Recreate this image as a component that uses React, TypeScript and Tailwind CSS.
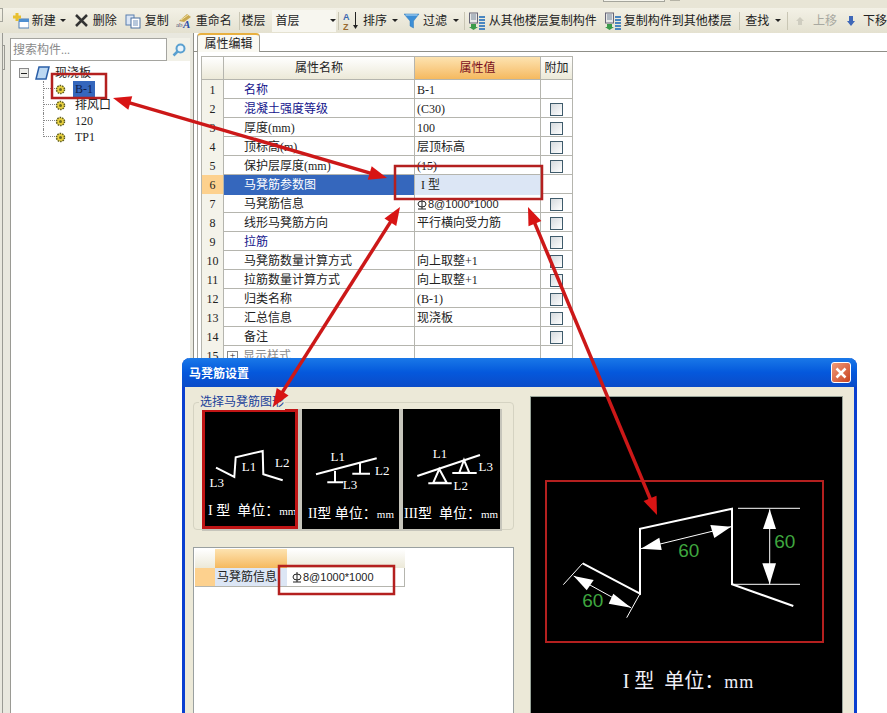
import type { ReactNode } from "react";

const rows = [
  { n: 1, name: "名称", value: "B-1", link: true, noCheck: true },
  { n: 2, name: "混凝土强度等级", value: "(C30)", link: true },
  { n: 3, name: "厚度(mm)", value: "100" },
  { n: 4, name: "顶标高(m)", value: "层顶标高" },
  { n: 5, name: "保护层厚度(mm)", value: "(15)" },
  { n: 6, name: "马凳筋参数图", value: "I 型", active: true, noCheck: true },
  { n: 7, name: "马凳筋信息", value: "8@1000*1000", rebar: true },
  { n: 8, name: "线形马凳筋方向", value: "平行横向受力筋" },
  { n: 9, name: "拉筋", value: "", link: true },
  { n: 10, name: "马凳筋数量计算方式", value: "向上取整+1" },
  { n: 11, name: "拉筋数量计算方式", value: "向上取整+1" },
  { n: 12, name: "归类名称", value: "(B-1)" },
  { n: 13, name: "汇总信息", value: "现浇板" },
  { n: 14, name: "备注", value: "" },
];

const Caret = ({ className }: { className: string }) => (
  <span className={`h-0 w-0 border-x-[3px] border-t-[3px] border-x-transparent border-t-[#222] ${className}`} />
);

const Sep = ({ className }: { className: string }) => (
  <span className={`h-[18px] w-px bg-[#c9c6b4] ${className}`} />
);

const NewIcon = () => (
  <svg width="16" height="16" viewBox="0 0 16 16" className="shrink-0">
    <rect x="6" y="6" width="10" height="9" fill="#fff" stroke="#4f7fb5" />
    <rect x="6" y="6" width="10" height="3" fill="#4f8fd0" />
    <path d="M4 0v8M0 4h8" stroke="#e8c030" strokeWidth="3" />
  </svg>
);

const CopyIcon = () => (
  <svg width="16" height="16" viewBox="0 0 16 16" className="shrink-0">
    <rect x="1" y="2" width="8" height="10" fill="#dbe6f5" stroke="#5b7fae" />
    <rect x="6" y="5" width="9" height="10" fill="#fff" stroke="#4b6f9e" />
    <path d="M8 8h5M8 10h5M8 12h5" stroke="#6f8fb8" />
  </svg>
);

const RenameIcon = () => (
  <svg width="16" height="16" viewBox="0 0 16 16" className="shrink-0">
    <path d="M3 8 11 1l4 3-7 5z" fill="#c8a850" />
    <path d="M5 7l7-5" stroke="#f2e2a0" />
    <text x="0" y="14" fontSize="7" fill="#557">ab</text>
    <text x="7" y="15" fontSize="11" fontWeight="bold" fontStyle="italic" fill="#2a4fa8" fontFamily="Liberation Serif">A</text>
  </svg>
);

const SortIcon = () => (
  <svg width="16" height="20" viewBox="0 0 16 20" className="shrink-0">
    <text x="0" y="9" fontSize="9" fontWeight="bold" fill="#3a68b0" fontFamily="Liberation Sans">A</text>
    <text x="0" y="19" fontSize="9" fontWeight="bold" fill="#9a6a30" fontFamily="Liberation Sans">Z</text>
    <path d="M12.5 1v16" stroke="#222" />
    <path d="M10 14h5l-2.5 4z" fill="#222" />
  </svg>
);

const FilterIcon = () => (
  <svg width="16" height="16" viewBox="0 0 16 16" className="shrink-0">
    <path d="M0 1h15L9.5 8v7L6 13V8z" fill="#3d8fd6" stroke="#2f78b8" strokeWidth="0.5" />
    <path d="M1.5 2h12" stroke="#bfe0f5" />
  </svg>
);

const FloorIcon = () => (
  <svg width="16" height="18" viewBox="0 0 16 18" className="shrink-0">
    <rect x="0.5" y="1" width="8" height="10" fill="#e8e8e8" stroke="#667" />
    <path d="M2 3h5M2 5h5M2 7h5" stroke="#789" />
    <path d="M2 12h5v3h2l-4.500 3-4.500-3h2z" fill="#3a9a4a" />
    <path d="M10 5h6M10 8h6M10 11h6M10 14h6M10 17h6" stroke="#4a86c0" strokeWidth="2" />
  </svg>
);

const Gear = () => (
  <svg width="11" height="11" viewBox="0 0 11 11" className="shrink-0">
    <circle cx="5.500" cy="5.500" r="4" fill="#e8d040" stroke="#5a5a20" strokeWidth="1.500" strokeDasharray="1.500 1" />
    <circle cx="5.500" cy="5.500" r="1.500" fill="#6a6a20" />
  </svg>
);

const Rebar = () => (
  <svg width="10" height="11" viewBox="0 0 10 11" className="mr-px shrink-0">
    <ellipse cx="5" cy="5" rx="4" ry="3" fill="none" stroke="#222" />
    <path d="M5 0v10M1 10h8" stroke="#222" />
  </svg>
);

const TreeNode = ({ label, last, active }: { label: string; last?: boolean; active?: boolean }) => (
  <div className="ml-[32px] flex h-4 items-center">
    <span className={`w-[12px] self-start border-l border-dotted border-[#888] ${last ? "h-2" : "h-4"}`}>
      <span className="block h-2 border-b border-dotted border-[#888]" />
    </span>
    <Gear />
    <span className={`ml-[7px] h-4 px-[2px] leading-4 ${active ? "bg-[#3567bd] text-[#10204a]" : "text-[#222]"}`}>
      {label}
    </span>
  </div>
);

const Checkbox = () => (
  <span className="block h-[13px] w-[13px] border border-[#3f5b6b] bg-linear-to-br from-[#d5dade] to-white" />
);

const Thumb = ({ children, label, selected }: { children: ReactNode; label: ReactNode; selected?: boolean }) => (
  <div className={`h-[120px] overflow-hidden bg-black text-white ${selected ? "w-[96px] border-[3px] border-[#c01515]" : "w-[97px]"}`}>
    <svg
      viewBox="0 0 97 88"
      className={`block h-[88px] w-[97px] ${selected ? "-ml-[3px] -mt-[3px]" : ""}`}
      stroke="#fff"
      strokeWidth="2"
      fill="none"
    >
      {children}
    </svg>
    <div className={`whitespace-nowrap text-[14px] leading-[24px] ${selected ? "mt-[2px] pl-[3px]" : "mt-[5px]"}`}>
      {label}
    </div>
  </div>
);

const L = ({ x, y, children }: { x: number; y: number; children: string }) => (
  <text x={x} y={y} fill="#fff" stroke="none" fontSize="13" textAnchor="middle" dominantBaseline="central" fontFamily="Liberation Serif">
    {children}
  </text>
);

const Arrow = ({ x1, y1, x2, y2 }: { x1: number; y1: number; x2: number; y2: number }) => {
  const len = Math.hypot(x2 - x1, y2 - y1);
  const ux = (x2 - x1) / len;
  const uy = (y2 - y1) / len;
  const head = (x: number, y: number, d: number) => {
    const bx = x + ux * d * 18;
    const by = y + uy * d * 18;
    return `${x},${y} ${bx - uy * 7},${by + ux * 7} ${bx + uy * 7},${by - ux * 7}`;
  };
  return (
    <g fill="#d81414">
      <line x1={x1 + ux * 12} y1={y1 + uy * 12} x2={x2 - ux * 12} y2={y2 - uy * 12} stroke="#cc1818" strokeWidth="3.5" />
      <polygon points={head(x1, y1, 1)} />
      <polygon points={head(x2, y2, -1)} />
    </g>
  );
};

export default function App() {
  return (
    <div className="relative flex h-[713px] w-[887px] flex-col overflow-hidden bg-white font-['Liberation_Serif','Noto_Sans_CJK_SC',sans-serif] text-xs text-[#222]">
      {/* window strip + toolbar */}
      <div className="flex h-2 items-start bg-[#e8e5d6] pl-[603px]">
        <span className="h-[2px] w-[62px] border-x border-b border-[#a5a59c] bg-[#f5f4ec]" />
        <span className="ml-[5px] h-px w-[10px] bg-[#b5b3a6]" />
      </div>
      <div className="flex h-[25px] items-center bg-linear-to-b from-[#f3f1e6] to-[#e4e1d0] whitespace-nowrap">
        <span className="h-[14px] w-[4px] self-start border-y border-r border-[#a5a59c]" />
        <span className="ml-[10px]"><NewIcon /></span>
        <span className="ml-[3px]">新建</span>
        <Caret className="ml-[4px]" />
        <svg width="13" height="13" viewBox="0 0 13 13" className="ml-[9px] shrink-0">
          <path d="M1 1l11 11M12 1 1 12" stroke="#333" strokeWidth="2.500" />
        </svg>
        <span className="ml-[5px]">删除</span>
        <span className="ml-[8px]"><CopyIcon /></span>
        <span className="ml-[4px]">复制</span>
        <span className="ml-[7px]"><RenameIcon /></span>
        <span className="ml-[4px]">重命名</span>
        <Sep className="ml-[7px]" />
        <span className="ml-[2px]">楼层</span>
        <span className="ml-[7px] flex h-[22px] w-[66px] items-center bg-[#f7f6ef] pl-[3px]">
          首层
          <Caret className="ml-[31px]" />
        </span>
        <Sep className="ml-[2px]" />
        <span className="ml-[4px]"><SortIcon /></span>
        <span className="ml-[4px]">排序</span>
        <Caret className="ml-[5px]" />
        <span className="ml-[6px]"><FilterIcon /></span>
        <span className="ml-[3px]">过滤</span>
        <Caret className="ml-[6px]" />
        <Sep className="ml-[5px]" />
        <span className="ml-[4px]"><FloorIcon /></span>
        <span className="ml-[4px]">从其他楼层复制构件</span>
        <span className="ml-[8px]"><FloorIcon /></span>
        <span className="ml-[3px]">复制构件到其他楼层</span>
        <Sep className="ml-[7px]" />
        <span className="ml-[6px]">查找</span>
        <Caret className="ml-[6px]" />
        <Sep className="ml-[6px]" />
        <svg width="10" height="10" viewBox="0 0 10 10" className="ml-[7px] shrink-0">
          <path d="M5 1 9 5H7v4H3V5H1z" fill="#cfcdc0" />
        </svg>
        <span className="ml-[8px] text-[#a8a8a0]">上移</span>
        <svg width="8" height="10" viewBox="0 0 8 10" className="ml-[10px] shrink-0">
          <path d="M2 0h4v5h2L4 10 0 5h2z" fill="#3f68b8" />
        </svg>
        <span className="ml-[8px]">下移</span>
      </div>

      <div className="flex min-h-0 flex-1">
        {/* component tree */}
        <aside className="flex w-[194px] shrink-0 border-r border-[#8f8f88] bg-[#e9e8df] pl-[2px]">
          <div className="w-[8px] border-l border-[#9a9a94]">
            <div className="mt-[12px] h-[25px] w-[2px] border-y border-r border-[#9a9a94]" />
          </div>
          <div className="mt-[5px] flex w-[180px] flex-col border-l border-[#9a9a94]">
            <div className="flex h-[23px] shrink-0">
              <div className="flex w-[156px] items-center border-y border-r border-[#a5a5a0] bg-white pl-[2px] text-[#8a8a8a]">搜索构件...</div>
              <div className="flex w-[23px] items-center justify-center bg-[#f2f1e8]">
                <svg width="14" height="14" viewBox="0 0 14 14">
                  <circle cx="8.500" cy="5.500" r="4" fill="#e8f3fb" stroke="#5aa0d0" strokeWidth="2" />
                  <path d="M5.500 8.500 1.500 12.500" stroke="#5aa0d0" strokeWidth="2.500" />
                </svg>
              </div>
            </div>
            <div className="flex-1 bg-white pt-[4px]">
              <div className="flex h-4 items-center pl-[8px]">
                <span className="flex h-[10px] w-[10px] items-center justify-center border border-[#8a8a8a] bg-[#eeeeea]">
                  <span className="h-px w-[6px] bg-[#222]" />
                </span>
                <svg width="15" height="15" viewBox="0 0 15 15" className="ml-[6px] shrink-0">
                  <path d="M4 1h10l-3 12H1z" fill="#bcd8f2" stroke="#2a5fa8" strokeWidth="1.500" />
                </svg>
                <span className="ml-[5px]">现浇板</span>
              </div>
              <TreeNode label="B-1" active />
              <TreeNode label="排风口" />
              <TreeNode label="120" />
              <TreeNode label="TP1" last />
            </div>
          </div>
        </aside>

        {/* property grid */}
        <main className="min-w-0 flex-1">
          <div className="flex h-[19px] border-b border-[#8f8f88] pl-[3px]">
            <div className="flex h-[19px] w-[63px] items-center justify-center rounded-t border-x border-t-2 border-x-[#9a9a94] border-t-[#e8b040] bg-[#faf9f2]">属性编辑</div>
          </div>
          <div className="ml-[3px] h-full border-l border-[#a5a5a0] pl-[3px] pt-[4px]">
            <div className="w-[372px] border-l border-t border-[#b5b5ae]">
              <div className="grid h-[23px] grid-cols-[22px_191px_126px_32px] border-b border-[#b5b5ae] text-center leading-[22px]">
                <div className="border-r border-[#b5b5ae] bg-linear-to-b from-white to-[#ece9d8]" />
                <div className="border-r border-[#b5b5ae] bg-linear-to-b from-white to-[#ece9d8]">属性名称</div>
                <div className="border-r border-[#b5b5ae] bg-linear-to-b from-[#fde3b0] to-[#f5b95e] text-[#7a1020]">属性值</div>
                <div className="border-r border-[#b5b5ae] bg-linear-to-b from-white to-[#ece9d8]">附加</div>
              </div>
              {rows.map((r) => (
                <div key={r.n} className="grid h-[19px] grid-cols-[22px_191px_126px_32px] border-b border-[#b5b5ae] leading-[20px]">
                  <div className={`border-r border-[#b5b5ae] text-center ${r.active ? "bg-[#fdd18e]" : "bg-[#f4f3ea]"}`}>{r.n}</div>
                  <div className={`border-r border-[#b5b5ae] pl-[20px] ${r.active ? "bg-[#3567bd] text-white" : r.link ? "text-[#14148c]" : ""}`}>{r.name}</div>
                  <div className={`flex items-center border-r border-[#b5b5ae] pl-[2px] ${r.active ? "bg-[#dce6f5] pl-[6px]" : ""} ${r.rebar ? "font-['Liberation_Sans',sans-serif] text-[11px]" : ""}`}>
                    {r.rebar && <Rebar />}
                    {r.value}
                  </div>
                  <div className="flex items-center justify-center border-r border-[#b5b5ae]">{!r.noCheck && <Checkbox />}</div>
                </div>
              ))}
              <div className="grid h-[19px] grid-cols-[22px_191px_126px_32px] border-b border-[#b5b5ae] leading-[20px]">
                <div className="border-r border-[#b5b5ae] bg-[#f4f3ea] text-center">15</div>
                <div className="flex items-center border-r border-[#b5b5ae] pl-[3px] text-[#8a8a8a]">
                  <span className="mr-[5px] flex h-[11px] w-[11px] items-center justify-center border border-[#888] text-[10px] leading-none text-[#222]">+</span>
                  显示样式
                </div>
                <div className="border-r border-[#b5b5ae]" />
                <div className="border-r border-[#b5b5ae]" />
              </div>
            </div>
          </div>
        </main>
      </div>

      {/* 马凳筋设置 dialog */}
      <div className="absolute left-[182px] top-[358px] h-[380px] w-[675px] rounded-t-lg border-x-[3px] border-[#0a3fd0] bg-[#ece9d8]">
        <div className="-mx-[3px] flex h-[29px] items-center justify-between rounded-t-lg bg-linear-to-b from-[#1a78e8] via-[#0558dc] to-[#0a4bc8] pl-[7px] pr-[6px]">
          <span className="pt-[2px] font-bold text-white">马凳筋设置</span>
          <span className="flex h-[21px] w-[20px] items-center justify-center rounded-[3px] border border-white bg-linear-to-br from-[#ef9a78] to-[#c8401c]">
            <svg width="12" height="12" viewBox="0 0 12 12">
              <path d="M1.500 1.500l9 9M10.500 1.500l-9 9" stroke="#fff" strokeWidth="2.500" />
            </svg>
          </span>
        </div>
        <div className="flex pl-[8px]">
          <div className="w-[321px] pt-[15px]">
            <div className="relative h-[128px] rounded-[4px] border border-[#d5d3c2] pl-[8px] pt-[6px]">
              <span className="absolute -top-[9px] left-[5px] bg-[#ece9d8] px-px leading-[16px] text-[#1a3f9a]">选择马凳筋图形</span>
              <div className="flex w-[300px] gap-[4px] bg-[#c6c5bb] pb-[2px]">
                <Thumb label={<>I 型&nbsp; 单位：<span className="text-[11px]">mm</span></>} selected>
                  <polyline points="14,58.700 32.300,68 33.700,48.300 60.700,42 61.300,65.300 80.700,71.300" />
                  <L x={47} y={57.7}>L1</L>
                  <L x={80.3} y={53.7}>L2</L>
                  <L x={14.7} y={73.3}>L3</L>
                </Thumb>
                <Thumb label={<span className="pl-[6px]">II型 单位：<span className="text-[11px]">mm</span></span>}>
                  <path d="M14 65.300 74.700 49.300M33 62v11.300M25.300 73.300h16M58 54.300v10.400M50.300 64.700H68" />
                  <L x={35.7} y={47}>L1</L>
                  <L x={80.3} y={61}>L2</L>
                  <L x={48} y={75}>L3</L>
                </Thumb>
                <Thumb label={<span className="pl-[1px]">III型&nbsp; 单位：<span className="text-[11px]">mm</span></span>}>
                  <path d="M14.300 67 77 46M25.300 74.300h23.400M49.300 64h24.400" />
                  <path d="M36.300 60 30.300 73.700h13.400zM61 51 56.300 63.700h10z" />
                  <L x={37} y={44.3}>L1</L>
                  <L x={82.7} y={57}>L3</L>
                  <L x={57.7} y={76}>L2</L>
                </Thumb>
              </div>
            </div>
            <div className="mt-[17px] h-[200px] border border-[#9aa0a0] bg-white pl-px pt-px">
              <div className="grid h-[19px] w-[210px] grid-cols-[20px_72px_118px]">
                <div className="bg-linear-to-b from-white to-[#ece9d8]" />
                <div className="bg-linear-to-b from-[#fde3b0] to-[#f5b95e]" />
                <div className="bg-linear-to-b from-white to-[#ece9d8]" />
              </div>
              <div className="grid h-[19px] w-[210px] grid-cols-[20px_72px_118px] border-b border-[#b5b5ae] leading-[18px]">
                <div className="bg-[#fdd18e]" />
                <div className="bg-[#dce6f5] pl-[2px]">马凳筋信息</div>
                <div className="flex items-center border-r border-[#b5b5ae] pl-[5px] font-['Liberation_Sans','Noto_Sans_CJK_SC',sans-serif] text-[11px]">
                  <Rebar />
                  8@1000*1000
                </div>
              </div>
            </div>
          </div>

          <div className="ml-[16px] mt-[9px] h-[340px] w-[313px] border border-[#9aa59a] bg-black text-white">
            <svg viewBox="0 0 312 270" className="block h-[270px] w-[312px]" fill="none" stroke="#fff">
              <polyline points="51.700,166.300 109,196.700 109,131.700 201,111.700 201,187.300 262.300,209" strokeWidth="2" />
              <path d="M32.300 187.700 51.700 166.300M95.700 220.700 109 196.700M207 111.300h62M201.700 187.300H269M238.700 112.300v75M110 151.700 200 129.700M42.700 179 100 210.700" />
              <g fill="#fff" stroke="none">
                <polygon points="238.700,112.300 232,132 245,132" />
                <polygon points="238.700,187.300 231.300,166.300 245,166.300" />
                <polygon points="110,151.700 128.300,140.700 130.700,153" />
                <polygon points="200,129.700 179.300,128 183.300,141" />
                <polygon points="42.700,179 62.700,183 55.700,193.300" />
                <polygon points="100,210.700 82.300,196.700 77.700,206.700" />
              </g>
              <g fill="#3fa63f" stroke="none" fontSize="19" fontFamily="Liberation Sans" textAnchor="middle">
                <text x={157.7} y={160}>60</text>
                <text x={253.7} y={151}>60</text>
                <text x={61.7} y={210}>60</text>
              </g>
            </svg>
            <div className="mt-[2px] pl-[4px] text-center text-[20px] leading-[24px] text-[#f0f0f8]">I 型 &nbsp;单位：<span className="text-[18px] tracking-[1px]">mm</span></div>
          </div>
        </div>
      </div>

      {/* red annotations on top of the screenshot */}
      <svg className="pointer-events-none absolute inset-0" width="887" height="713" fill="none">
        <g stroke="#b4201f" strokeWidth="2.500">
          <rect x="52" y="74" width="54" height="24" />
          <rect x="395" y="166" width="147" height="33" />
          <rect x="279" y="566" width="115" height="28" />
          <rect x="546" y="481" width="277" height="161" strokeWidth="2" />
        </g>
        <Arrow x1={113} y1={98} x2={387} y2={178} />
        <Arrow x1={273} y1={407} x2={400} y2={207} />
        <Arrow x1={528} y1={207} x2={657} y2={515} />
      </svg>
    </div>
  );
}
